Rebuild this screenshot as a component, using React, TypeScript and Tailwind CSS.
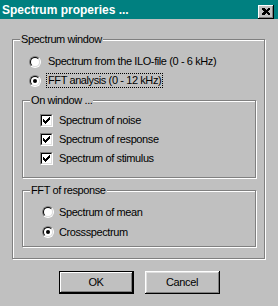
import type { ReactNode } from "react";

const CHECK_COLS = [2, 3, 4, 3, 2, 1, 0];

function Radio({ checked }: { checked?: boolean }) {
  return (
    <span className="flex h-[12px] w-[12px] shrink-0 rounded-full border border-t-[#808080] border-l-[#808080] border-b-white border-r-white">
      <span className="flex h-full w-full items-center justify-center rounded-full border border-t-black border-l-black border-b-[#dfdfdf] border-r-[#dfdfdf] bg-white">
        {checked && <span className="h-[4px] w-[4px] rounded-full bg-black" />}
      </span>
    </span>
  );
}

function Checkbox() {
  return (
    <span className="flex h-[13px] w-[13px] shrink-0 border border-t-[#808080] border-l-[#808080] border-b-white border-r-white">
      <span className="flex h-full w-full items-center justify-center border border-t-black border-l-black border-b-[#dfdfdf] border-r-[#dfdfdf] bg-white">
        <svg width="7" height="7" viewBox="0 0 7 7" shapeRendering="crispEdges">
          {CHECK_COLS.map((y, x) => (
            <rect key={x} x={x} y={y} width="1" height="3" fill="#000" />
          ))}
        </svg>
      </span>
    </span>
  );
}

function Group({ label, className, children }: { label: string; className: string; children: ReactNode }) {
  return (
    <div className={`relative border border-[#808080] shadow-[inset_1px_1px_0_#fff,1px_1px_0_#fff] ${className}`}>
      <span className="absolute left-[7px] top-[-8px] bg-[#c0c0c0] px-[1px] leading-[14px]">{label}</span>
      {children}
    </div>
  );
}

function Option({ control, children, className = "" }: { control: ReactNode; children: ReactNode; className?: string }) {
  return (
    <div className={`flex h-[19px] items-center ${className}`}>
      {control}
      {children}
    </div>
  );
}

function Button({ children, primary }: { children: ReactNode; primary?: boolean }) {
  return (
    <button
      className={`flex h-[23px] w-[75px] items-center justify-center bg-[#c0c0c0] ${
        primary
          ? "border border-black shadow-[inset_-1px_-1px_0_#000,inset_1px_1px_0_#fff,inset_-2px_-2px_0_#808080]"
          : "shadow-[inset_-1px_-1px_0_#000,inset_1px_1px_0_#fff,inset_-2px_-2px_0_#808080,inset_2px_2px_0_#dfdfdf]"
      }`}
    >
      {children}
    </button>
  );
}

export default function App() {
  return (
    <div
      className="h-[306px] w-[278px] overflow-hidden bg-[#c0c0c0] text-[11px] tracking-[-0.4px] text-black"
      style={{ fontFamily: '"Liberation Sans", Arial, sans-serif' }}
    >
      <div className="flex h-[19px] items-center justify-between bg-[#008080] pl-[2px] pr-[4px]">
        <span className="text-[12px] font-bold tracking-normal text-white">Spectrum properies ...</span>
        <span className="mt-[4px] flex h-[14px] w-[16px] items-center justify-center bg-[#c0c0c0] shadow-[inset_-1px_-1px_0_#000,inset_1px_1px_0_#fff,inset_-2px_-2px_0_#808080]">
          <svg width="8" height="7" viewBox="0 0 8 7" shapeRendering="crispEdges">
            <path d="M0 0h2l2 2 2-2h2v1L6 3.5 8 6v1H6L4 5 2 7H0V6l2-2.5L0 1z" fill="#000" />
          </svg>
        </span>
      </div>

      <Group label="Spectrum window" className="ml-[12px] mt-[20px] h-[220px] w-[253px] pt-[12px]">
        <Option control={<Radio />} className="pl-[16px]">
          <span className="ml-[7px]">Spectrum from the ILO-file (0 - 6 kHz)</span>
        </Option>
        <Option control={<Radio checked />} className="pl-[16px]">
          <span className="ml-[5px] border border-dotted border-black px-[1px] leading-[13px]">FFT analysis (0 - 12 kHz)</span>
        </Option>

        <Group label="On window ..." className="ml-[9px] mt-[10px] h-[78px] w-[234px] pt-[10px]">
          {["Spectrum of noise", "Spectrum of response", "Spectrum of stimulus"].map((t) => (
            <Option key={t} control={<Checkbox />} className="pl-[17px]">
              <span className="ml-[6px]">{t}</span>
            </Option>
          ))}
        </Group>

        <Group label="FFT of response" className="ml-[9px] mt-[12px] h-[57px] w-[234px] pt-[11px]">
          <Option control={<Radio />} className="h-[20px] pl-[19px]">
            <span className="ml-[5px]">Spectrum of mean</span>
          </Option>
          <Option control={<Radio checked />} className="h-[20px] pl-[19px]">
            <span className="ml-[5px]">Crossspectrum</span>
          </Option>
        </Group>
      </Group>

      <div className="mt-[12px] flex justify-center gap-[11px]">
        <Button primary>OK</Button>
        <Button>Cancel</Button>
      </div>
    </div>
  );
}
